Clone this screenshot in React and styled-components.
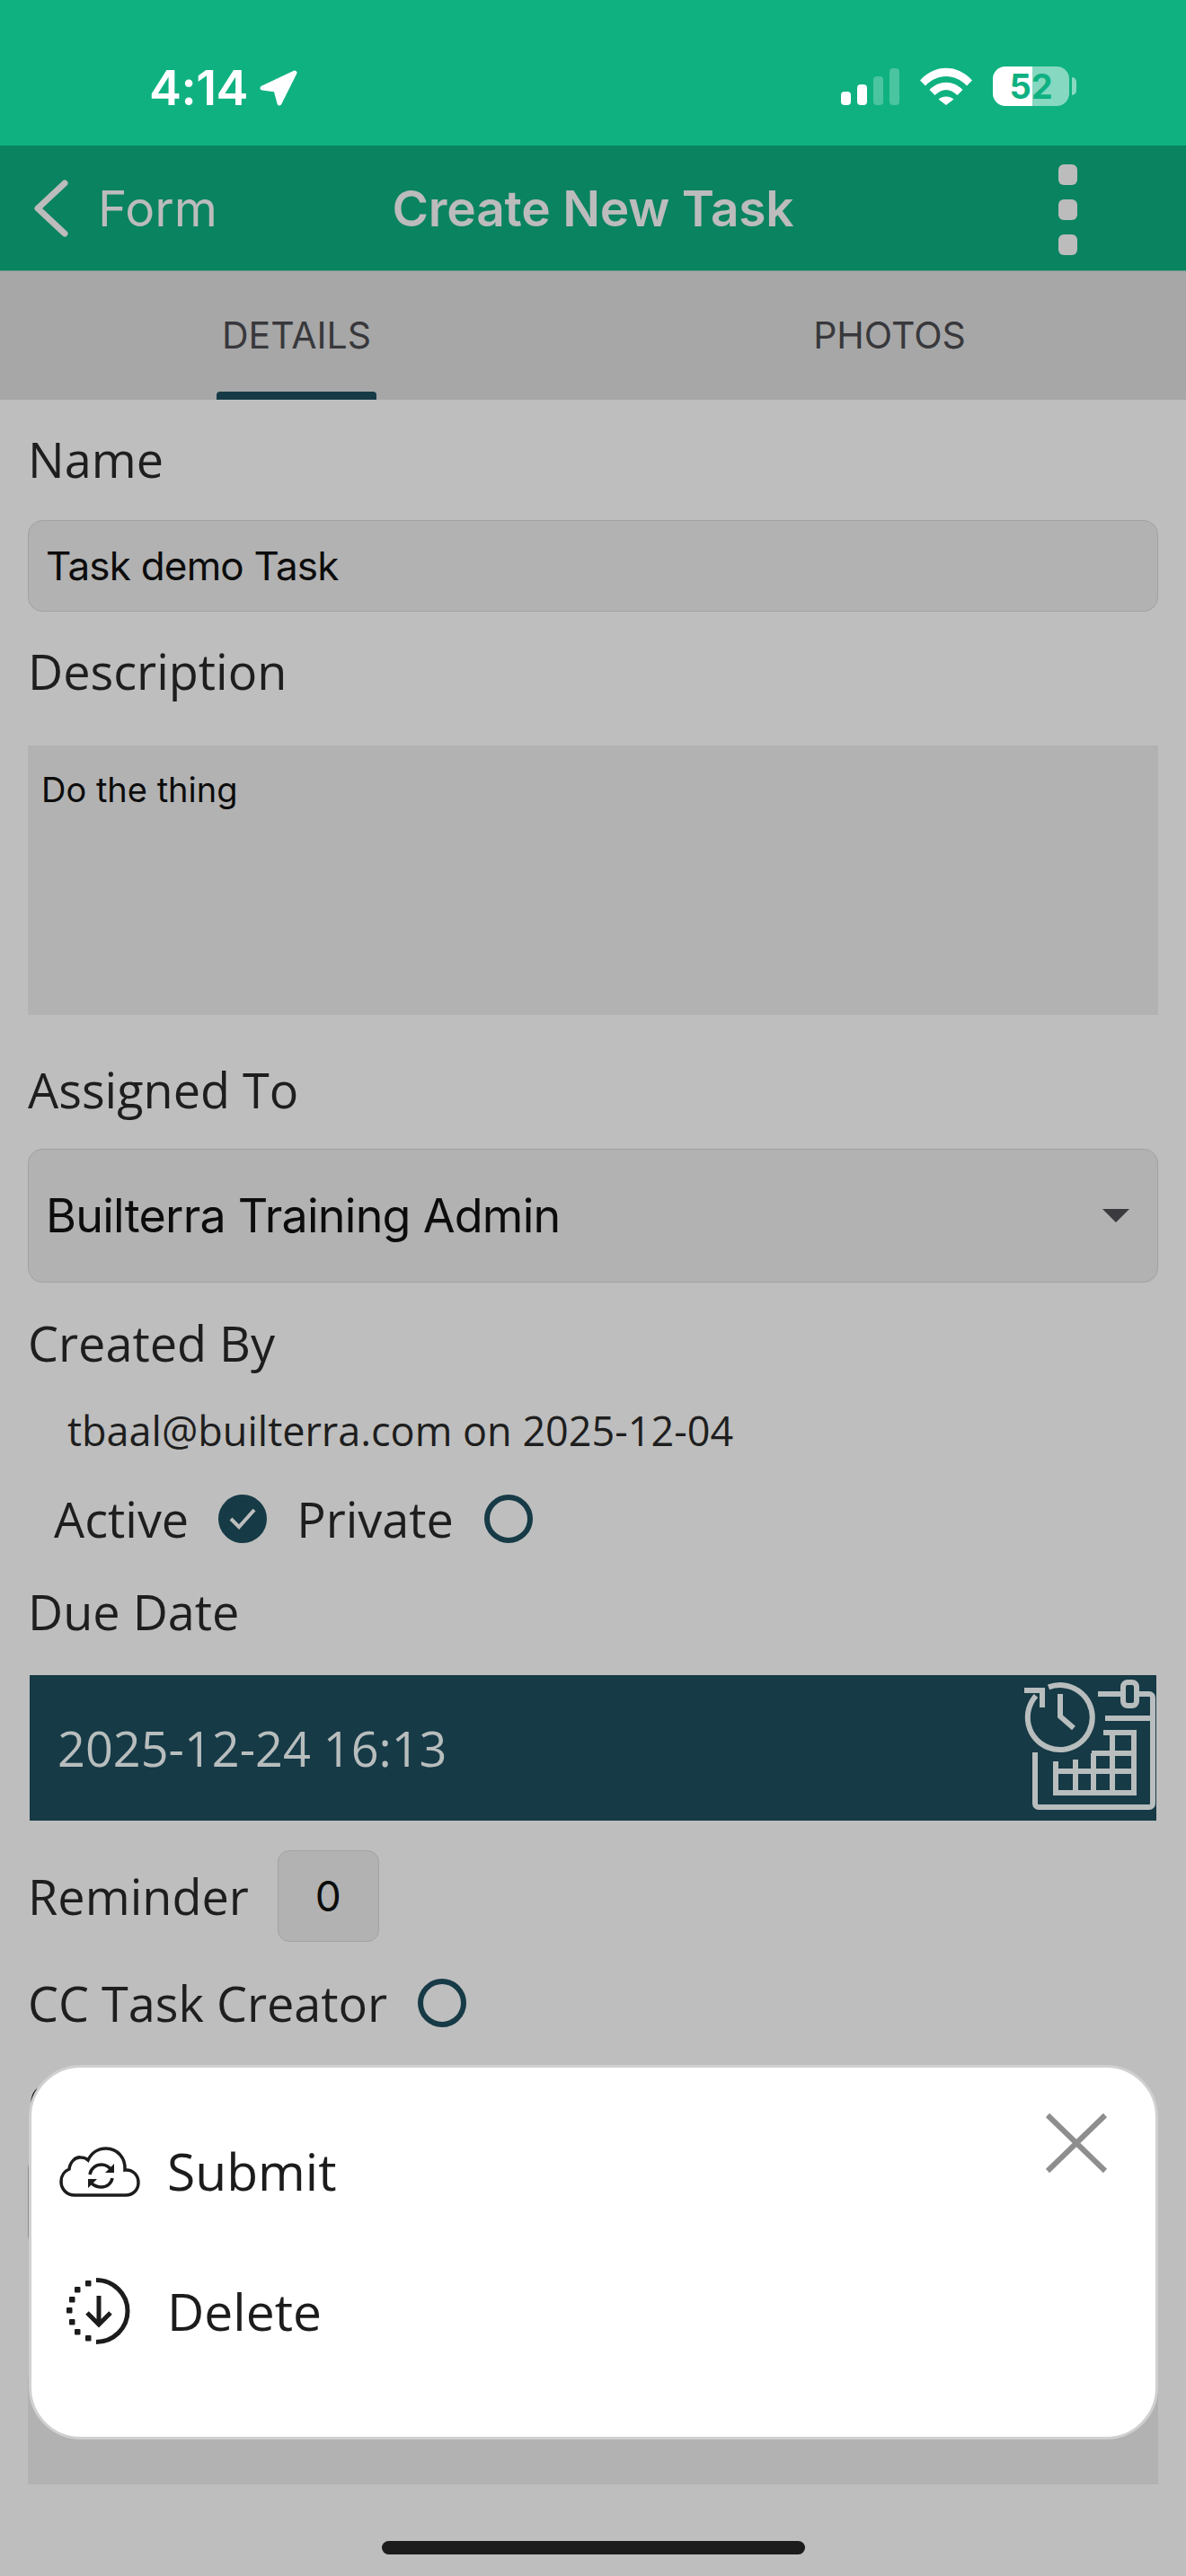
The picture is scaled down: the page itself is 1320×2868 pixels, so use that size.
import styled, { createGlobalStyle } from "styled-components";

const GlobalStyle = createGlobalStyle`
  html, body {
    margin: 0;
    padding: 0;
    background: #bebebe;
  }
  * {
    box-sizing: border-box;
  }
`;

const SANS = `"Open Sans", "Noto Sans", sans-serif`;
const UI = `Inter, "Liberation Sans", sans-serif`;

const Screen = styled.div`
  position: relative;
  width: 1320px;
  height: 2868px;
  overflow: hidden;
  background: #bebebe;
  font-family: ${SANS};
  color: #1e1e1e;
`;

const StatusBar = styled.div`
  height: 162px;
  background: #0fb181;
  display: flex;
  align-items: flex-start;
  justify-content: space-between;
  padding: 74px 122px 0 166px;
  color: #fff;
`;

const Clock = styled.div`
  display: flex;
  align-items: center;
  gap: 12px;
  font-family: ${UI};
  font-size: 54px;
  font-weight: 600;
  line-height: 48px;
  letter-spacing: -0.5px;
`;

const StatusIcons = styled.div`
  display: flex;
  align-items: center;
  gap: 23px;
`;

const Signal = styled.div`
  display: flex;
  align-items: flex-end;
  gap: 7px;
  height: 42px;
  margin-left: 2px;
`;

const SignalBar = styled.span`
  width: 11px;
  height: ${(p) => p.$h}px;
  border-radius: 4px;
  background: ${(p) => (p.$on ? "#fff" : "rgba(255,255,255,0.25)")};
`;

const Battery = styled.div`
  display: flex;
  align-items: center;
  gap: 3px;
`;

const BatteryBody = styled.div`
  width: 85px;
  height: 44px;
  border-radius: 14px;
  background: linear-gradient(90deg, #fff 52%, rgba(255, 255, 255, 0.5) 52%);
  color: #0fb181;
  font-family: ${UI};
  font-size: 38px;
  font-weight: 700;
  line-height: 44px;
  text-align: center;
`;

const BatteryTip = styled.span`
  width: 5px;
  height: 20px;
  border-radius: 0 5px 5px 0;
  background: rgba(255, 255, 255, 0.5);
`;

const Header = styled.header`
  position: relative;
  height: 140px;
  background: #0a8360;
  display: flex;
  align-items: center;
  justify-content: space-between;
  padding: 0 121px 0 36px;
  color: #bcbcbc;
  border-bottom: 1px solid #6d9a8c;
`;

const BackLink = styled.div`
  display: flex;
  align-items: center;
  gap: 33px;
  font-family: ${UI};
  font-size: 55px;
  font-weight: 400;
`;

const Title = styled.h1`
  position: absolute;
  left: 0;
  right: 0;
  top: 0;
  bottom: 0;
  margin: 0;
  display: flex;
  align-items: center;
  justify-content: center;
  font-family: ${UI};
  font-size: 55px;
  font-weight: 600;
  letter-spacing: -0.2px;
`;

const Kebab = styled.div`
  display: flex;
  flex-direction: column;
  gap: 16px;
  margin-top: 4px;
`;

const KebabDot = styled.span`
  width: 21px;
  height: 23px;
  border-radius: 6px;
  background: #bcbcbc;
`;

const Tabs = styled.nav`
  height: 143px;
  background: #a7a7a7;
  display: grid;
  grid-template-columns: 660px 660px;
`;

const Tab = styled.div`
  position: relative;
  display: flex;
  align-items: center;
  justify-content: center;
  padding-bottom: 2px;
  font-family: ${UI};
  font-size: 41px;
  color: #38383c;
`;

const TabMarker = styled.span`
  position: absolute;
  left: 241px;
  bottom: 0;
  width: 178px;
  height: 9px;
  border-radius: 4px 4px 0 0;
  background: #163a46;
`;

const Form = styled.main`
  padding: 36px 31px 0;
`;

const Label = styled.div`
  font-size: 54px;
  line-height: 60px;
  margin-top: ${(p) => p.$top || 0}px;
`;

const TextInput = styled.div`
  height: 102px;
  margin-top: ${(p) => p.$top || 38}px;
  padding: 0 19px;
  display: flex;
  align-items: center;
  background: #b2b2b2;
  border: 1.5px solid #a2a2a2;
  border-radius: 16px;
  font-family: ${UI};
  font-size: 44px;
  letter-spacing: -0.8px;
  color: #0c0c0c;
`;

const TextArea = styled.div`
  height: 300px;
  margin-top: 53px;
  padding: 26px 15px;
  background: #b2b2b2;
  font-family: ${UI};
  font-size: 38px;
  line-height: 46px;
  color: #0c0c0c;
`;

const Select = styled(TextInput)`
  height: 149px;
  justify-content: space-between;
  padding-right: 31px;
  font-size: 52px;
  letter-spacing: -0.75px;
`;

const Caret = styled.span`
  width: 0;
  height: 0;
  border-left: 15px solid transparent;
  border-right: 15px solid transparent;
  border-top: 15px solid #3a3a3f;
`;

const CreatedBy = styled.div`
  margin: 38px 0 0 44px;
  font-size: 45px;
  line-height: 60px;
`;

const ToggleRow = styled.div`
  display: flex;
  align-items: center;
  margin: ${(p) => p.$top}px 0 0 ${(p) => p.$left || 0}px;
  font-size: 54px;
  line-height: 60px;
`;

const ToggleLabel = styled.span`
  margin-right: ${(p) => p.$gap}px;
`;

const Ring = styled.span`
  width: 54px;
  height: 54px;
  margin-right: ${(p) => p.$gap || 0}px;
  border-radius: 50%;
  border: 6px solid #163a46;
  background: ${(p) => (p.$checked ? "#163a46" : "transparent")};
  display: flex;
  align-items: center;
  justify-content: center;
`;

const DateBar = styled.div`
  height: 162px;
  margin: 41px 2px 0;
  padding: 0 0 0 31px;
  display: flex;
  align-items: center;
  justify-content: space-between;
  background: #163a46;
  color: #b8bdbd;
  font-size: 54px;
`;

const DateIcon = styled.span`
  align-self: flex-start;
  margin-top: 5px;
  line-height: 0;
`;

const ReminderRow = styled.div`
  display: flex;
  align-items: center;
  margin-top: 33px;
  font-size: 54px;
`;

const ReminderBox = styled.div`
  width: 113px;
  height: 102px;
  margin-left: 32px;
  display: flex;
  align-items: center;
  justify-content: center;
  background: #b2b2b2;
  border: 1.5px solid #a2a2a2;
  border-radius: 13px;
  font-family: ${UI};
  font-size: 46px;
  color: #0c0c0c;
`;

const HiddenInput = styled(TextInput)`
  height: 107px;
  border-color: #8f8f8f;
`;

const HiddenArea = styled.div`
  height: 119px;
  margin-top: 142px;
  background: #b2b2b2;
`;

const HomeBar = styled.div`
  position: absolute;
  left: 425px;
  top: 2829px;
  width: 471px;
  height: 15px;
  border-radius: 8px;
  background: #1c1c1c;
`;

const Sheet = styled.div`
  position: absolute;
  left: 32px;
  top: 2299px;
  width: 1257px;
  height: 417px;
  padding: 79px 0 0 31px;
  background: #fff;
  border: 3px solid #d0d0d0;
  border-radius: 58px;
`;

const SheetAction = styled.div`
  display: flex;
  align-items: center;
  height: 72px;
  margin-bottom: ${(p) => p.$gap || 0}px;
  font-size: 57px;
  color: #1c1c1c;
`;

const ActionIcon = styled.span`
  display: flex;
  justify-content: center;
  width: 90px;
  margin-right: 30px;
  line-height: 0;
`;

const CloseButton = styled.span`
  position: absolute;
  top: 50px;
  right: 53px;
  display: block;
  line-height: 0;
`;

function Arrow() {
  return (
    <svg width="44" height="41" viewBox="0 0 44 41">
      <path d="M4 20 40 3 23 37 19 22Z" fill="#fff" stroke="#fff" strokeWidth="5" strokeLinejoin="round" />
    </svg>
  );
}

function Wifi() {
  return (
    <svg width="58" height="42" viewBox="0 0 58 42">
      <path d="M0 14.5C16-4 42-4 58 14.5L52 20.5C39 6.5 19 6.5 6 20.5Z" fill="#fff" />
      <path d="M10.5 25C21 14 37 14 47.5 25L41.5 31C33 23 25 23 16.5 31Z" fill="#fff" />
      <path d="M20.5 35.5C25 31.5 33 31.5 37.5 35.5L29 42Z" fill="#fff" />
    </svg>
  );
}

function ChevronLeft() {
  return (
    <svg width="40" height="64" viewBox="0 0 40 64" fill="none">
      <path d="M36 4 6 32l30 28" stroke="#bcbcbc" strokeWidth="7" strokeLinecap="round" strokeLinejoin="round" />
    </svg>
  );
}

function CheckMark() {
  return (
    <svg width="30" height="26" viewBox="0 0 30 26" fill="none">
      <path d="M2 13l9 9L28 3" stroke="#bebebe" strokeWidth="4" />
    </svg>
  );
}

function CalendarClock() {
  return (
    <svg width="148" height="146" viewBox="0 0 148 146" fill="none" stroke="#b8bdbd" strokeWidth="6">
      <path d="M83 16h28M126 16h14a4 4 0 0 1 4 4v118a4 4 0 0 1-4 4H17a4 4 0 0 1-4-4V81" />
      <rect x="111" y="3" width="15" height="26" rx="5" />
      <path d="M91 43h53" />
      <path d="M89 59h34v67H36V91" />
      <path d="M36 102h87M76 82h47M58 89v37M78 82v44M99 59v67" />
      <path d="M28 8.4A36 36 0 1 1 14 18" />
      <path d="M1 12h20v19" />
      <path d="M41 16v25l15 13" />
    </svg>
  );
}

function CloudSync() {
  return (
    <svg width="90" height="57" viewBox="0 0 90 57" fill="none" stroke="#1c1c1c">
      <path
        d="M17 55C8 55 2 48 2 40C2 33 6 28 11 26C12 18 18 12 24 13C27 13 30 14 32 16C36 7 44 3 52 3C65 3 74 14 73 27C82 26 88 33 88 41C88 49 82 55 74 55Z"
        strokeWidth="3.5"
      />
      <path d="M34 32C35 25 41 21 47 21C51 21 55 23 58 27M59 36C58 42 53 46 47 46C42 46 38 44 35 41" strokeWidth="3.5" />
      <path d="M61 20v10H51ZM32 47V37h10Z" fill="#1c1c1c" stroke="none" />
    </svg>
  );
}

function DownloadDotted() {
  const dots = [
    [24, 6],
    [12, 13],
    [6, 24],
    [3, 36],
    [6, 49],
    [12, 60],
    [24, 67],
  ];
  return (
    <svg width="74" height="74" viewBox="0 0 74 74" fill="none" stroke="#1c1c1c">
      <path d="M33 2.5a35 34.5 0 0 1 0 69" strokeWidth="5" />
      <path d="M36 20v32M23 39l13 13 13-13" strokeWidth="5" />
      {dots.map(([x, y]) => (
        <rect key={`${x}-${y}`} x={x - 3} y={y - 3} width="6.5" height="6.5" rx="1" fill="#1c1c1c" stroke="none" />
      ))}
    </svg>
  );
}

function CloseIcon() {
  return (
    <svg width="70" height="68" viewBox="0 0 70 68" fill="none">
      <path d="M3 3l64 62M67 3 3 65" stroke="#8e8e8e" strokeWidth="6" />
    </svg>
  );
}

export default function App() {
  return (
    <Screen>
      <GlobalStyle />
      <StatusBar>
        <Clock>
          4:14
          <Arrow />
        </Clock>
        <StatusIcons>
          <Signal>
            <SignalBar $h={15} $on />
            <SignalBar $h={23} $on />
            <SignalBar $h={32} />
            <SignalBar $h={41} />
          </Signal>
          <Wifi />
          <Battery>
            <BatteryBody>52</BatteryBody>
            <BatteryTip />
          </Battery>
        </StatusIcons>
      </StatusBar>
      <Header>
        <BackLink>
          <ChevronLeft />
          Form
        </BackLink>
        <Title>Create New Task</Title>
        <Kebab>
          <KebabDot />
          <KebabDot />
          <KebabDot />
        </Kebab>
      </Header>
      <Tabs>
        <Tab>
          DETAILS
          <TabMarker />
        </Tab>
        <Tab>PHOTOS</Tab>
      </Tabs>
      <Form>
        <Label>Name</Label>
        <TextInput>Task demo Task</TextInput>
        <Label $top={36}>Description</Label>
        <TextArea>Do the thing</TextArea>
        <Label $top={53}>Assigned To</Label>
        <Select $top={36}>
          Builterra Training Admin
          <Caret />
        </Select>
        <Label $top={37}>Created By</Label>
        <CreatedBy>tbaal@builterra.com on 2025-12-04</CreatedBy>
        <ToggleRow $top={38} $left={29}>
          <ToggleLabel $gap={33}>Active</ToggleLabel>
          <Ring $checked $gap={33}>
            <CheckMark />
          </Ring>
          <ToggleLabel $gap={34}>Private</ToggleLabel>
          <Ring />
        </ToggleRow>
        <Label $top={43}>Due Date</Label>
        <DateBar>
          2025-12-24 16:13
          <DateIcon>
            <CalendarClock />
          </DateIcon>
        </DateBar>
        <ReminderRow>
          Reminder
          <ReminderBox>0</ReminderBox>
        </ReminderRow>
        <ToggleRow $top={38}>
          <ToggleLabel $gap={34}>CC Task Creator</ToggleLabel>
          <Ring />
        </ToggleRow>
        <Label $top={50}>Comments</Label>
        <HiddenInput $top={28} />
        <HiddenArea />
      </Form>
      <Sheet>
        <CloseButton>
          <CloseIcon />
        </CloseButton>
        <SheetAction $gap={84}>
          <ActionIcon>
            <CloudSync />
          </ActionIcon>
          Submit
        </SheetAction>
        <SheetAction>
          <ActionIcon>
            <DownloadDotted />
          </ActionIcon>
          Delete
        </SheetAction>
      </Sheet>
      <HomeBar />
    </Screen>
  );
}
